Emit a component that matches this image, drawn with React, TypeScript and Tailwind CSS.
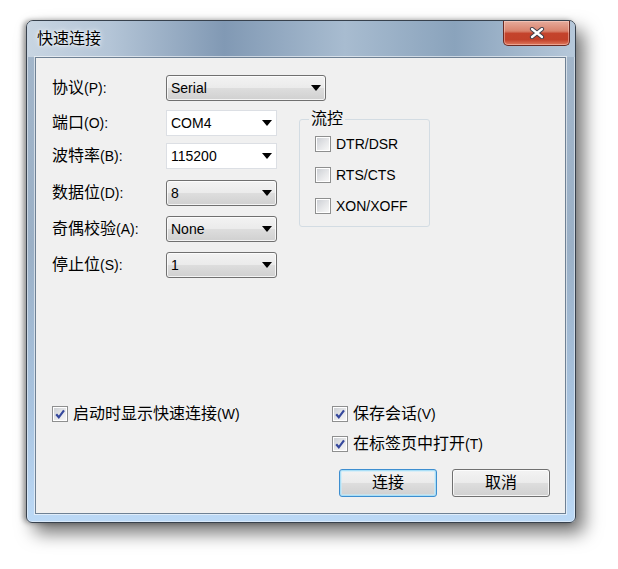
import clsx from 'clsx';

function Txt({ zh, en }: { zh: string; en?: string }) {
  return (
    <span className="whitespace-nowrap leading-[18px]">
      <span className="text-[16px]">{zh}</span>
      {en && <span className="text-[14px]">{en}</span>}
    </span>
  );
}

function Arrow() {
  return (
    <svg width="10" height="6" viewBox="0 0 10 6">
      <path d="M0 0h10L5 6z" fill="#000" />
    </svg>
  );
}

function Combo({ value, editable, className }: { value: string; editable?: boolean; className: string }) {
  return (
    <div
      className={clsx(
        'flex h-[26px] shrink-0 items-center justify-between pl-[4px] pr-[4px] text-[14px] leading-none',
        editable
          ? 'border border-[#dcdfe4] bg-white'
          : 'rounded-[3px] border border-[#707070] bg-[linear-gradient(180deg,#f3f3f3_0%,#ebebeb_48%,#dddddd_52%,#d0d0d0_100%)] shadow-[inset_0_0_0_1px_rgba(255,255,255,0.75)]',
        className,
      )}
    >
      <span>{value}</span>
      <Arrow />
    </div>
  );
}

function Check({ checked }: { checked?: boolean }) {
  return (
    <span className="flex h-[16px] w-[16px] shrink-0 border border-[#8e8f8f] bg-white p-[1px]">
      <span className="flex h-full w-full items-center justify-center bg-[linear-gradient(135deg,#cdd0d5_0%,#e6e7e9_55%,#f7f7f7_100%)]">
        {checked && (
          <svg width="12" height="12" viewBox="0 0 12 12">
            <path d="M2.2 6.2 L4.8 9.3 L10 2.4" fill="none" stroke="#34479c" strokeWidth="2.2" />
          </svg>
        )}
      </span>
    </span>
  );
}

function CheckRow({ zh, en, checked }: { zh: string; en?: string; checked?: boolean }) {
  return (
    <div className="flex h-[16px] items-center gap-[5px]">
      <Check checked={checked} />
      <Txt zh={zh} en={en} />
    </div>
  );
}

function Field({ zh, en, children }: { zh: string; en: string; children: React.ReactNode }) {
  return (
    <div className="flex items-center">
      <div className="w-[114px] shrink-0">
        <Txt zh={zh} en={en} />
      </div>
      {children}
    </div>
  );
}

function Btn({ label, primary }: { label: string; primary?: boolean }) {
  return (
    <div
      className={clsx(
        'flex h-[28px] w-[98px] items-center justify-center rounded-[3px] border bg-[linear-gradient(180deg,#f3f3f3_0%,#ebebeb_48%,#dddddd_52%,#d0d0d0_100%)] text-[16px] leading-none',
        primary
          ? 'border-[#3d8ed0] shadow-[inset_0_0_0_1px_#a9def6,inset_0_0_0_2px_rgba(200,235,250,0.6)]'
          : 'border-[#707070] shadow-[inset_0_0_0_1px_rgba(255,255,255,0.75)]',
      )}
    >
      {label}
    </div>
  );
}

function CloseBtn() {
  return (
    <div className="ml-auto mr-[5px] flex h-[25px] w-[67px] shrink-0 items-center justify-center rounded-b-[5px] border border-t-0 border-[#6b2a22] bg-[linear-gradient(180deg,#e6ab9c_0%,#d9826c_42%,#c4432c_52%,#c2412a_78%,#e07a5e_100%)] shadow-[inset_0_0_0_1px_rgba(255,220,210,0.45)]">
      <svg width="16" height="12" viewBox="0 0 16 12">
        <path d="M3 2 L13 10 M13 2 L3 10" stroke="#3e3e4a" strokeWidth="4.2" strokeLinecap="round" />
        <path d="M3 2 L13 10 M13 2 L3 10" stroke="#ffffff" strokeWidth="2.3" strokeLinecap="round" />
      </svg>
    </div>
  );
}

export default function App() {
  return (
    <div className="h-[569px] w-[618px] overflow-hidden bg-white pl-[26px] pt-[20px] font-['Liberation_Sans','Noto_Sans_CJK_SC',sans-serif] text-black">
      <div className="flex h-[503px] w-[550px] flex-col rounded-t-[7px] rounded-b-[6px] border border-[#37414d] bg-[linear-gradient(180deg,#a3b6ca_0%,#9bb0c6_45%,#a9c4e0_78%,#bcd9f6_100%)] shadow-[inset_0_0_0_1px_rgba(255,255,255,0.45),-3px_0_5px_rgba(0,0,0,0.35),8px_10px_18px_rgba(0,0,0,0.55)]">
        <div className="flex h-[36px] shrink-0 items-start rounded-t-[6px] bg-[linear-gradient(90deg,#c8d5e2_0%,#b4c5d7_15%,#8199b4_36%,#a8bcd0_58%,#8aa3bc_78%,#b6c8da_100%)]">
          <span className="pl-[10px] pt-[9px] text-[16px] leading-[18px] [text-shadow:0_0_6px_#fff,0_0_3px_#fff]">快速连接</span>
          <CloseBtn />
        </div>
        <div className="mb-[8px] ml-[8px] mr-[9px] flex flex-1 flex-col border border-[#6f8194] bg-[#f0f0f0] shadow-[0_0_0_1px_rgba(255,255,255,0.55)]">
          <div className="pl-[16px] pt-[17px]">
            <Field zh="协议" en="(P):">
              <Combo value="Serial" className="w-[160px]" />
            </Field>
            <div className="mt-[9px] flex">
              <div className="flex flex-col">
                <Field zh="端口" en="(O):">
                  <Combo value="COM4" editable className="w-[111px]" />
                </Field>
                <div className="mt-[7px]">
                  <Field zh="波特率" en="(B):">
                    <Combo value="115200" editable className="w-[111px]" />
                  </Field>
                </div>
                <div className="mt-[11px]">
                  <Field zh="数据位" en="(D):">
                    <Combo value="8" className="w-[111px]" />
                  </Field>
                </div>
                <div className="mt-[10px]">
                  <Field zh="奇偶校验" en="(A):">
                    <Combo value="None" className="w-[111px]" />
                  </Field>
                </div>
                <div className="mt-[10px]">
                  <Field zh="停止位" en="(S):">
                    <Combo value="1" className="w-[111px]" />
                  </Field>
                </div>
              </div>
              <fieldset className="ml-[22px] mt-[1px] h-[116px] w-[131px] rounded-[3px] border border-[#d3dce3]">
                <legend className="ml-[9px] px-[2px] text-[16px] leading-[16px]">流控</legend>
                <div className="flex flex-col gap-[15px] pl-[15px] pt-[9px]">
                  <CheckRow zh="" en="DTR/DSR" />
                  <CheckRow zh="" en="RTS/CTS" />
                  <CheckRow zh="" en="XON/XOFF" />
                </div>
              </fieldset>
            </div>
          </div>
          <div className="mt-auto flex pb-[16px] pl-[16px]">
            <div className="w-[280px]">
              <CheckRow checked zh="启动时显示快速连接" en="(W)" />
            </div>
            <div className="flex flex-col">
              <CheckRow checked zh="保存会话" en="(V)" />
              <div className="mt-[14px]">
                <CheckRow checked zh="在标签页中打开" en="(T)" />
              </div>
              <div className="ml-[7px] mt-[17px] flex gap-[15px]">
                <Btn label="连接" primary />
                <Btn label="取消" />
              </div>
            </div>
          </div>
        </div>
      </div>
    </div>
  );
}
